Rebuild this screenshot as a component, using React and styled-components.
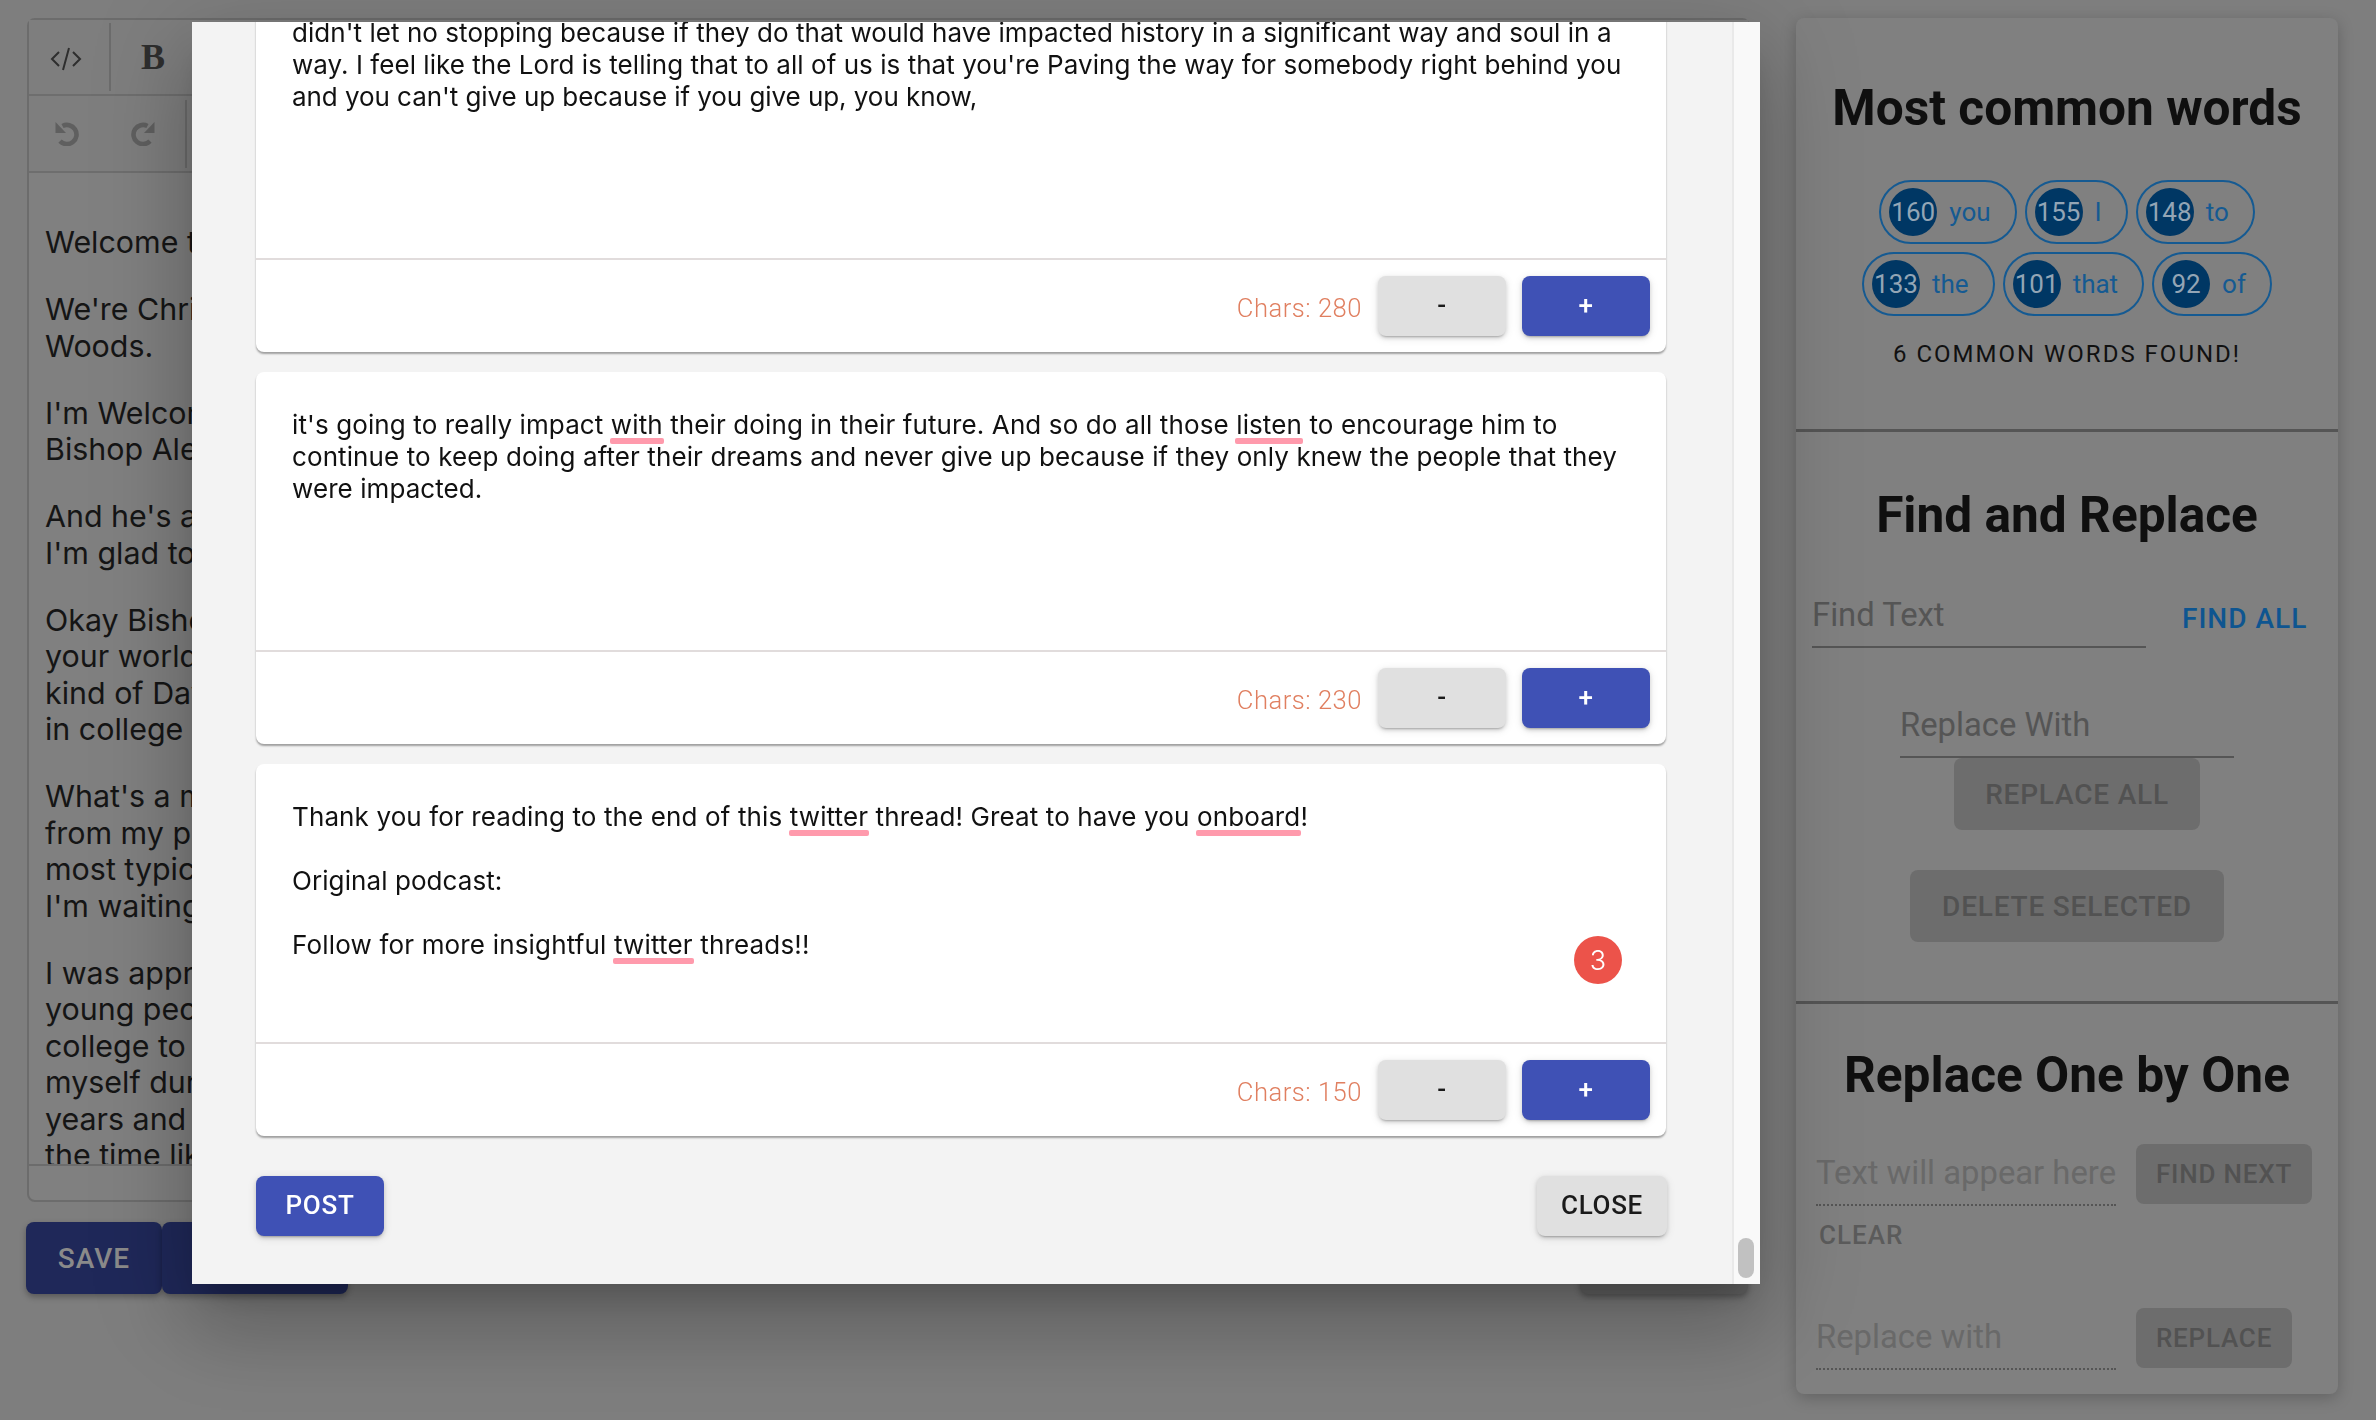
import React from "react";
import styled, { createGlobalStyle } from "styled-components";

const Global = createGlobalStyle`
  html, body { margin: 0; padding: 0; width: 2376px; height: 1420px; overflow: hidden; background: #7e7e7e; }
  * { box-sizing: border-box; }
`;

const Page = styled.div`
  width: 2376px;
  height: 1420px;
  padding: 18px 38px 0 26px;
  display: flex;
  gap: 46px;
  font-family: Roboto, sans-serif;
`;
const MainColumn = styled.main`
  width: 1724px;
  display: flex;
  flex-direction: column;
`;
const Editor = styled.section`
  height: 1184px;
  border: 2px solid #6c6c6c;
  border-radius: 8px;
  background: #808080;
  display: flex;
  flex-direction: column;
  margin-left: 1px;
`;
const ToolRow = styled.div`
  height: ${(p) => p.$h}px;
  flex: none;
  border-bottom: 2px solid #6e6e6e;
  display: flex;
  align-items: center;
  background: #7e7e7e;
`;
const ToolCell = styled.div`
  width: ${(p) => p.$w}px;
  height: 68px;
  display: flex;
  align-items: center;
  justify-content: center;
  color: ${(p) => p.$c || "#2e2e2e"};
`;
const ToolSep = styled.span`
  width: 2px;
  height: 68px;
  margin-left: ${(p) => p.$ml || 0}px;
  background: #6c6c6c;
`;
const BoldGlyph = styled.span`
  font: bold 36px "Liberation Serif", serif;
`;
const CodeSvg = styled.svg`
  margin-top: 3px;
`;
const HistorySvg = styled.svg`
  transform: ${(p) => (p.$flip ? "scaleX(-1)" : "none")};
`;
const EditorText = styled.div`
  height: 993px;
  overflow: hidden;
  padding: 51px 16px 0;
  font: 400 30.4px/36.4px Inter, sans-serif;
  color: #151515;
  white-space: nowrap;
  border-bottom: 2px solid #6c6c6c;
  flex: none;
`;
const Para = styled.p`
  margin: 0 0 30.8px;
`;
const ActionRow = styled.div`
  margin-top: 20px;
  padding-right: 2px;
  display: flex;
  align-items: flex-end;
  justify-content: space-between;
`;
const ActionGroup = styled.div`
  display: flex;
`;
const DarkButton = styled.button`
  width: ${(p) => p.$w}px;
  height: 72px;
  border: 0;
  border-radius: 8px;
  background: ${(p) => p.$bg || "#1f2859"};
  color: #8a8a8a;
  font: 500 28px Roboto, sans-serif;
  letter-spacing: 1px;
  box-shadow: 0 3px 6px rgba(0, 0, 0, 0.3);
`;

const SidePanel = styled.aside`
  width: 542px;
  height: 1376px;
  background: #808080;
  border-radius: 8px;
  box-shadow: 0 4px 16px rgba(0, 0, 0, 0.22);
  display: flex;
  flex-direction: column;
`;
const PanelSection = styled.section`
  height: ${(p) => p.$h}px;
  flex: none;
  border-bottom: ${(p) => (p.$last ? "0" : "3px solid #555")};
  padding-top: ${(p) => p.$pt}px;
`;
const PanelTitle = styled.h2`
  margin: 0;
  text-align: center;
  font: 700 49.6px/56px Roboto, sans-serif;
  color: #0f0f0f;
`;
const ChipRow = styled.div`
  display: flex;
  justify-content: center;
  gap: 8px;
  margin-top: ${(p) => p.$mt}px;
`;
const Chip = styled.div`
  height: 64px;
  border: 2px solid #155a92;
  border-radius: 32px;
  display: flex;
  align-items: center;
  padding: 0 24px 0 8px;
  color: #155a92;
  font: 400 26px Roboto, sans-serif;
`;
const ChipCount = styled.span`
  width: 48px;
  height: 48px;
  border-radius: 50%;
  background: #003764;
  color: #93a5b5;
  display: flex;
  align-items: center;
  justify-content: center;
  font-size: 26px;
  margin-right: 12px;
`;
const Overline = styled.div`
  margin-top: 22px;
  text-align: center;
  font: 400 24px/32px Roboto, sans-serif;
  letter-spacing: 2px;
  color: #111;
`;
const InputRow = styled.div`
  display: flex;
  align-items: flex-start;
  gap: ${(p) => p.$gap || 0}px;
  margin: ${(p) => p.$m};
`;
const LineInput = styled.div`
  width: ${(p) => p.$w}px;
  height: 62px;
  flex: none;
  border-bottom: 2px ${(p) => p.$line || "solid"} #555;
  color: ${(p) => p.$c || "#555"};
  font: 400 32.8px/58px Roboto, sans-serif;
  white-space: nowrap;
`;
const TextAction = styled.div`
  color: ${(p) => p.$c};
  font: 500 ${(p) => p.$fs || 28}px Roboto, sans-serif;
  letter-spacing: 1px;
  margin: ${(p) => p.$m};
`;
const MutedButton = styled.div`
  width: ${(p) => p.$w}px;
  height: ${(p) => p.$h || 72}px;
  flex: none;
  background: #6d6d6d;
  color: #525252;
  border-radius: 8px;
  font: 500 ${(p) => p.$fs || 28}px Roboto, sans-serif;
  letter-spacing: 0.8px;
  display: flex;
  align-items: center;
  justify-content: center;
`;

const Modal = styled.div`
  position: fixed;
  left: 192px;
  top: 22px;
  width: 1568px;
  height: 1262px;
  background: #f3f3f3;
  display: flex;
  overflow: hidden;
  box-shadow: 0 22px 30px -14px rgba(0, 0, 0, 0.2), 0 48px 76px 6px rgba(0, 0, 0, 0.14),
    0 18px 92px 16px rgba(0, 0, 0, 0.12);
`;
const ModalBody = styled.div`
  flex: 1;
  padding-left: 64px;
  display: flex;
  flex-direction: column;
`;
const Card = styled.article`
  width: 1410px;
  height: 372px;
  flex: none;
  margin-top: ${(p) => p.$mt}px;
  background: #fff;
  border-radius: 8px;
  box-shadow: 0 2px 2px rgba(0, 0, 0, 0.35);
  display: flex;
  flex-direction: column;
  position: relative;
`;
const CardText = styled.div`
  height: 278px;
  flex: none;
  padding: 37px 36px 0;
  font: 400 26px/32px Inter, sans-serif;
  color: #111;
`;
const Line = styled.div`
  min-height: 32px;
  white-space: nowrap;
  letter-spacing: ${(p) => p.$ls ?? 0.08}px;
`;
const Mark = styled.span`
  position: relative;
  &::after {
    content: "";
    position: absolute;
    left: -1px;
    right: -1px;
    bottom: -4px;
    height: 6px;
    border-radius: 2px;
    background: #ff9aac;
  }
`;
const CardFooter = styled.div`
  height: 94px;
  border-top: 2px solid #e1dcdc;
  padding: 16px;
  display: flex;
  align-items: center;
  justify-content: flex-end;
  gap: 16px;
`;
const Chars = styled.span`
  font: 300 25.6px Roboto, sans-serif;
  color: #e07f60;
  padding-top: 3px;
  letter-spacing: 0.5px;
`;
const RaisedButton = styled.button`
  width: ${(p) => p.$w}px;
  height: 60px;
  border: 0;
  border-radius: 8px;
  background: ${(p) => (p.$primary ? "#3f51b5" : "#e0e0e0")};
  color: ${(p) => (p.$primary ? "#fff" : "#1a1a1a")};
  font: 500 26px Roboto, sans-serif;
  letter-spacing: 0.7px;
  padding: 0 0 2px;
  box-shadow: 0 3px 2px -2px rgba(0, 0, 0, 0.2), 0 2px 4px rgba(0, 0, 0, 0.14), 0 2px 10px rgba(0, 0, 0, 0.1);
`;
const Badge = styled.span`
  position: absolute;
  right: 44px;
  top: 172px;
  width: 48px;
  height: 48px;
  border-radius: 50%;
  background: #ec534a;
  color: #fff;
  display: flex;
  align-items: center;
  justify-content: center;
  font: 300 27px Inter, sans-serif;
`;
const ModalActions = styled.div`
  width: 1411px;
  margin-top: 40px;
  display: flex;
  justify-content: space-between;
`;
const ScrollTrack = styled.div`
  width: 28px;
  flex: none;
  background: #f9f9f9;
  border-left: 2px solid #e9e9e9;
  display: flex;
  flex-direction: column;
  justify-content: flex-end;
  align-items: center;
  padding: 0 2px 6px 0;
`;
const ScrollThumb = styled.div`
  width: 16px;
  height: 40px;
  border-radius: 8px;
  background: #c1c1c1;
`;

const editorParas = [
  ["Welcome to the show"],
  ["We're Christian and", "Woods."],
  ["I'm Welcoming", "Bishop Alex"],
  ["And he's a", "I'm glad to"],
  ["Okay Bishop", "your world", "kind of David", "in college"],
  ["What's a moment", "from my past", "most typical", "I'm waiting"],
  ["I was approached", "young people", "college to", "myself during", "years and", "the time like"],
];

const chips = [
  [
    [160, "you"],
    [155, "I"],
    [148, "to"],
  ],
  [
    [133, "the"],
    [101, "that"],
    [92, "of"],
  ],
];

function CodeIcon() {
  return (
    <CodeSvg width="32" height="24" viewBox="0 0 32 24" fill="none" stroke="currentColor" strokeWidth="2">
      <path d="M9 5 2 12l7 7M23 5l7 7-7 7M19 1l-6 22" />
    </CodeSvg>
  );
}

function HistoryIcon({ flip }) {
  return (
    <HistorySvg $flip={flip} width="24" height="24" viewBox="0 0 24 24">
      <path d="M7.5 4A9.6 9.6 0 1 1 5 19.2" fill="none" stroke="currentColor" strokeWidth="4.6" />
      <path d="M.5 0v11H11z" fill="currentColor" />
    </HistorySvg>
  );
}

function CardControls({ count }) {
  return (
    <CardFooter>
      <Chars>Chars: {count}</Chars>
      <RaisedButton $w={128}>-</RaisedButton>
      <RaisedButton $w={128} $primary>
        +
      </RaisedButton>
    </CardFooter>
  );
}

export default function App() {
  return (
    <>
      <Global />
      <Page>
        <MainColumn>
          <Editor>
            <ToolRow $h={76}>
              <ToolCell $w={74}>
                <CodeIcon />
              </ToolCell>
              <ToolSep $ml={6} />
              <ToolCell $w={84}>
                <BoldGlyph>B</BoldGlyph>
              </ToolCell>
            </ToolRow>
            <ToolRow $h={77}>
              <ToolCell $w={76} $c="#5f5f5f">
                <HistoryIcon />
              </ToolCell>
              <ToolCell $w={76} $c="#5f5f5f">
                <HistoryIcon flip />
              </ToolCell>
              <ToolSep $ml={4} />
            </ToolRow>
            <EditorText>
              {editorParas.map((p, i) => (
                <Para key={i}>
                  {p.map((l, j) => (
                    <div key={j}>{l}</div>
                  ))}
                </Para>
              ))}
            </EditorText>
          </Editor>
          <ActionRow>
            <ActionGroup>
              <DarkButton $w={136}>SAVE</DarkButton>
              <DarkButton $w={186}>PUBLISH</DarkButton>
            </ActionGroup>
            <DarkButton $w={168} $bg="#666">
              NEXT
            </DarkButton>
          </ActionRow>
        </MainColumn>

        <SidePanel>
          <PanelSection $h={414} $pt={62}>
            <PanelTitle>Most common words</PanelTitle>
            {chips.map((row, i) => (
              <ChipRow key={i} $mt={i === 0 ? 44 : 8}>
                {row.map(([n, w]) => (
                  <Chip key={w}>
                    <ChipCount>{n}</ChipCount>
                    {w}
                  </Chip>
                ))}
              </ChipRow>
            ))}
            <Overline>6 COMMON WORDS FOUND!</Overline>
          </PanelSection>
          <PanelSection $h={572} $pt={55}>
            <PanelTitle>Find and Replace</PanelTitle>
            <InputRow $m="43px 0 0 16px" $gap={36}>
              <LineInput $w={334}>Find Text</LineInput>
              <TextAction $c="#0e5590" $m="16px 0 0">
                FIND ALL
              </TextAction>
            </InputRow>
            <InputRow $m="48px 0 0 104px">
              <LineInput $w={334}>Replace With</LineInput>
            </InputRow>
            <InputRow $m="0 0 0 158px">
              <MutedButton $w={246}>REPLACE ALL</MutedButton>
            </InputRow>
            <InputRow $m="40px 0 0 114px">
              <MutedButton $w={314}>DELETE SELECTED</MutedButton>
            </InputRow>
          </PanelSection>
          <PanelSection $h={390} $pt={43} $last>
            <PanelTitle>Replace One by One</PanelTitle>
            <InputRow $m="41px 0 0 20px" $gap={20}>
              <LineInput $w={300} $line="dotted" $c="#696969">
                Text will appear here
              </LineInput>
              <MutedButton $w={176} $h={60} $fs={26}>
                FIND NEXT
              </MutedButton>
            </InputRow>
            <TextAction $c="#5b5b5b" $fs={26} $m="14px 0 0 23px">
              CLEAR
            </TextAction>
            <InputRow $m="58px 0 0 20px" $gap={20}>
              <LineInput $w={300} $line="dotted" $c="#696969">
                Replace with
              </LineInput>
              <MutedButton $w={156} $h={60} $fs={26}>
                REPLACE
              </MutedButton>
            </InputRow>
          </PanelSection>
        </SidePanel>
      </Page>

      <Modal>
        <ModalBody>
          <Card $mt={-42}>
            <CardText>
              <Line $ls={0.05}>
                didn't let no stopping because if they do that would have impacted history in a significant way and soul in a
              </Line>
              <Line $ls={0.04}>
                way. I feel like the Lord is telling that to all of us is that you're Paving the way for somebody right behind you
              </Line>
              <Line $ls={-0.06}>and you can't give up because if you give up, you know,</Line>
            </CardText>
            <CardControls count={280} />
          </Card>
          <Card $mt={20}>
            <CardText>
              <Line $ls={0.11}>
                it's going to really impact <Mark>with</Mark> their doing in their future. And so do all those{" "}
                <Mark>listen</Mark> to encourage him to
              </Line>
              <Line $ls={0.1}>
                continue to keep doing after their dreams and never give up because if they only knew the people that they
              </Line>
              <Line>were impacted.</Line>
            </CardText>
            <CardControls count={230} />
          </Card>
          <Card $mt={20}>
            <CardText>
              <Line $ls={0.12}>
                Thank you for reading to the end of this <Mark>twitter</Mark> thread! Great to have you{" "}
                <Mark>onboard</Mark>!
              </Line>
              <Line />
              <Line>Original podcast:</Line>
              <Line />
              <Line $ls={0.17}>
                Follow for more insightful <Mark>twitter</Mark> threads!!
              </Line>
            </CardText>
            <Badge>3</Badge>
            <CardControls count={150} />
          </Card>
          <ModalActions>
            <RaisedButton $w={128} $primary>
              POST
            </RaisedButton>
            <RaisedButton $w={130}>CLOSE</RaisedButton>
          </ModalActions>
        </ModalBody>
        <ScrollTrack>
          <ScrollThumb />
        </ScrollTrack>
      </Modal>
    </>
  );
}
